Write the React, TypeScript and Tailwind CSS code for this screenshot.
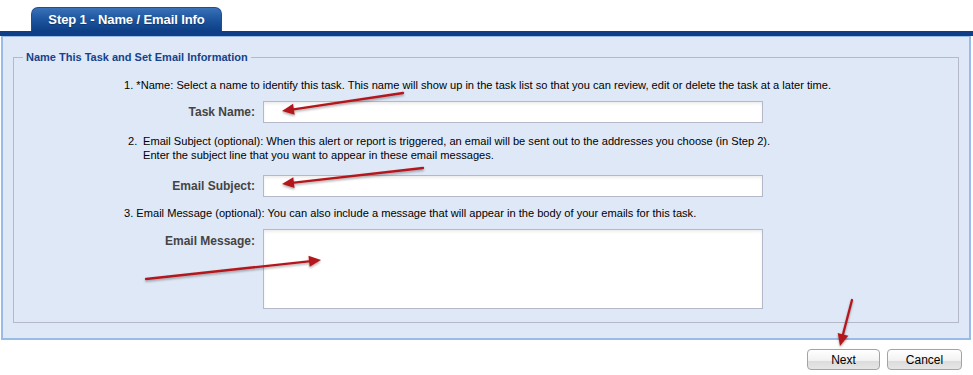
import React from "react";

const font = { fontFamily: '"Liberation Sans", Arial, sans-serif' };

function Arrow({ x1, y1, x2, y2 }: { x1: number; y1: number; x2: number; y2: number }) {
  const dx = x2 - x1;
  const dy = y2 - y1;
  const len = Math.sqrt(dx * dx + dy * dy);
  const ux = dx / len;
  const uy = dy / len;
  const hl = 12;
  const hw = 5.5;
  const bx = x2 - ux * hl;
  const by = y2 - uy * hl;
  const p1 = `${x2},${y2}`;
  const p2 = `${bx - uy * hw},${by + ux * hw}`;
  const p3 = `${bx + uy * hw},${by - ux * hw}`;
  return (
    <g>
      <line x1={x1} y1={y1} x2={bx + ux * 2} y2={by + uy * 2} stroke="#b3191b" strokeWidth={2.3} strokeLinecap="round" />
      <polygon points={`${p1} ${p2} ${p3}`} fill="#b3191b" />
    </g>
  );
}

export default function App() {
  return (
    <div className="relative w-[973px] h-[375px] bg-white overflow-hidden" style={font}>
      {/* Tab row */}
      <div className="h-[31px] pt-[7px] pl-[31px]">
        <div className="w-[191px] h-[24px] rounded-t-[7px] border border-b-0 border-[#1c4f94] bg-gradient-to-b from-[#3a72b8] via-[#1d559e] to-[#0e3f86] flex items-center justify-center">
          <span className="text-white font-bold text-[13px] tracking-[-0.1px] [text-shadow:0_1px_1px_rgba(0,0,0,0.3)]">
            Step 1 - Name / Email Info
          </span>
        </div>
      </div>
      {/* Dark bar */}
      <div className="h-[5px] bg-[#0f3e86]" />
      {/* Panel */}
      <div className="ml-[1px] w-[970px] border-x-2 border-b-2 border-t border-[#99bbe8] bg-[#dfe8f6] pt-[13px] pb-[15px] px-[10px]">
        <fieldset className="border border-[#b5b8c8] px-[0px] pb-[13px] m-0">
          <legend className="ml-[9px] px-[3px] text-[11px] leading-[14px] font-bold text-[#15428b]">
            Name This Task and Set Email Information
          </legend>
          <div className="text-[11.1px] leading-[14px] text-black">
            <div className="mt-[14px] ml-[110px]">
              1. *Name: Select a name to identify this task. This name will show up in the task list so that you can review, edit or delete the task at a later time.
            </div>
            <div className="mt-[9px] flex items-center">
              <div className="w-[241px] text-right text-[12px] font-bold text-[#444]">Task Name:</div>
              <div className="ml-[8px] w-[500px] h-[22px] border border-[#b5b8c8] bg-white shadow-[inset_0_2px_3px_rgba(0,0,0,0.07)]" />
            </div>
            <div className="mt-[11px] ml-[114px] flex">
              <span className="w-[15px]">2.</span>
              <span>
                Email Subject (optional): When this alert or report is triggered, an email will be sent out to the addresses you choose (in Step 2).
                <br />
                Enter the subject line that you want to appear in these email messages.
              </span>
            </div>
            <div className="mt-[13px] flex items-center">
              <div className="w-[241px] text-right text-[12px] font-bold text-[#444]">Email Subject:</div>
              <div className="ml-[8px] w-[500px] h-[22px] border border-[#b5b8c8] bg-white shadow-[inset_0_2px_3px_rgba(0,0,0,0.07)]" />
            </div>
            <div className="mt-[9px] ml-[110px]">
              3. Email Message (optional): You can also include a message that will appear in the body of your emails for this task.
            </div>
            <div className="mt-[9px] flex items-start">
              <div className="w-[241px] text-right text-[12px] font-bold text-[#444] pt-[5px]">Email Message:</div>
              <div className="ml-[8px] w-[500px] h-[80px] border border-[#b5b8c8] bg-white shadow-[inset_0_2px_3px_rgba(0,0,0,0.07)]" />
            </div>
          </div>
        </fieldset>
      </div>
      {/* Buttons */}
      <div className="mt-[9px] flex justify-end gap-[7px] pr-[11px]">
        <button className="w-[73px] h-[21px] rounded-[4px] border border-[#a3a3a3] bg-[linear-gradient(to_bottom,#ffffff_0%,#f2f2f2_55%,#dcdcdc_60%,#e6e6e6_100%)] text-[12px] text-black leading-none">
          Next
        </button>
        <button className="w-[75px] h-[21px] rounded-[4px] border border-[#a3a3a3] bg-[linear-gradient(to_bottom,#ffffff_0%,#f2f2f2_55%,#dcdcdc_60%,#e6e6e6_100%)] text-[12px] text-black leading-none">
          Cancel
        </button>
      </div>
      {/* Annotation arrows */}
      <svg className="absolute inset-0 pointer-events-none" width={973} height={375} viewBox="0 0 973 375">
        <defs>
          <filter id="sh" x="-20%" y="-20%" width="140%" height="140%">
            <feDropShadow dx="0" dy="1.5" stdDeviation="1.2" floodColor="#000" floodOpacity="0.35" />
          </filter>
        </defs>
        <g filter="url(#sh)">
          <Arrow x1={403} y1={93} x2={282} y2={111} />
          <Arrow x1={423} y1={168} x2={282} y2={184} />
          <Arrow x1={146} y1={279} x2={321} y2={260} />
          <Arrow x1={852} y1={300} x2={840} y2={346} />
        </g>
      </svg>
    </div>
  );
}
